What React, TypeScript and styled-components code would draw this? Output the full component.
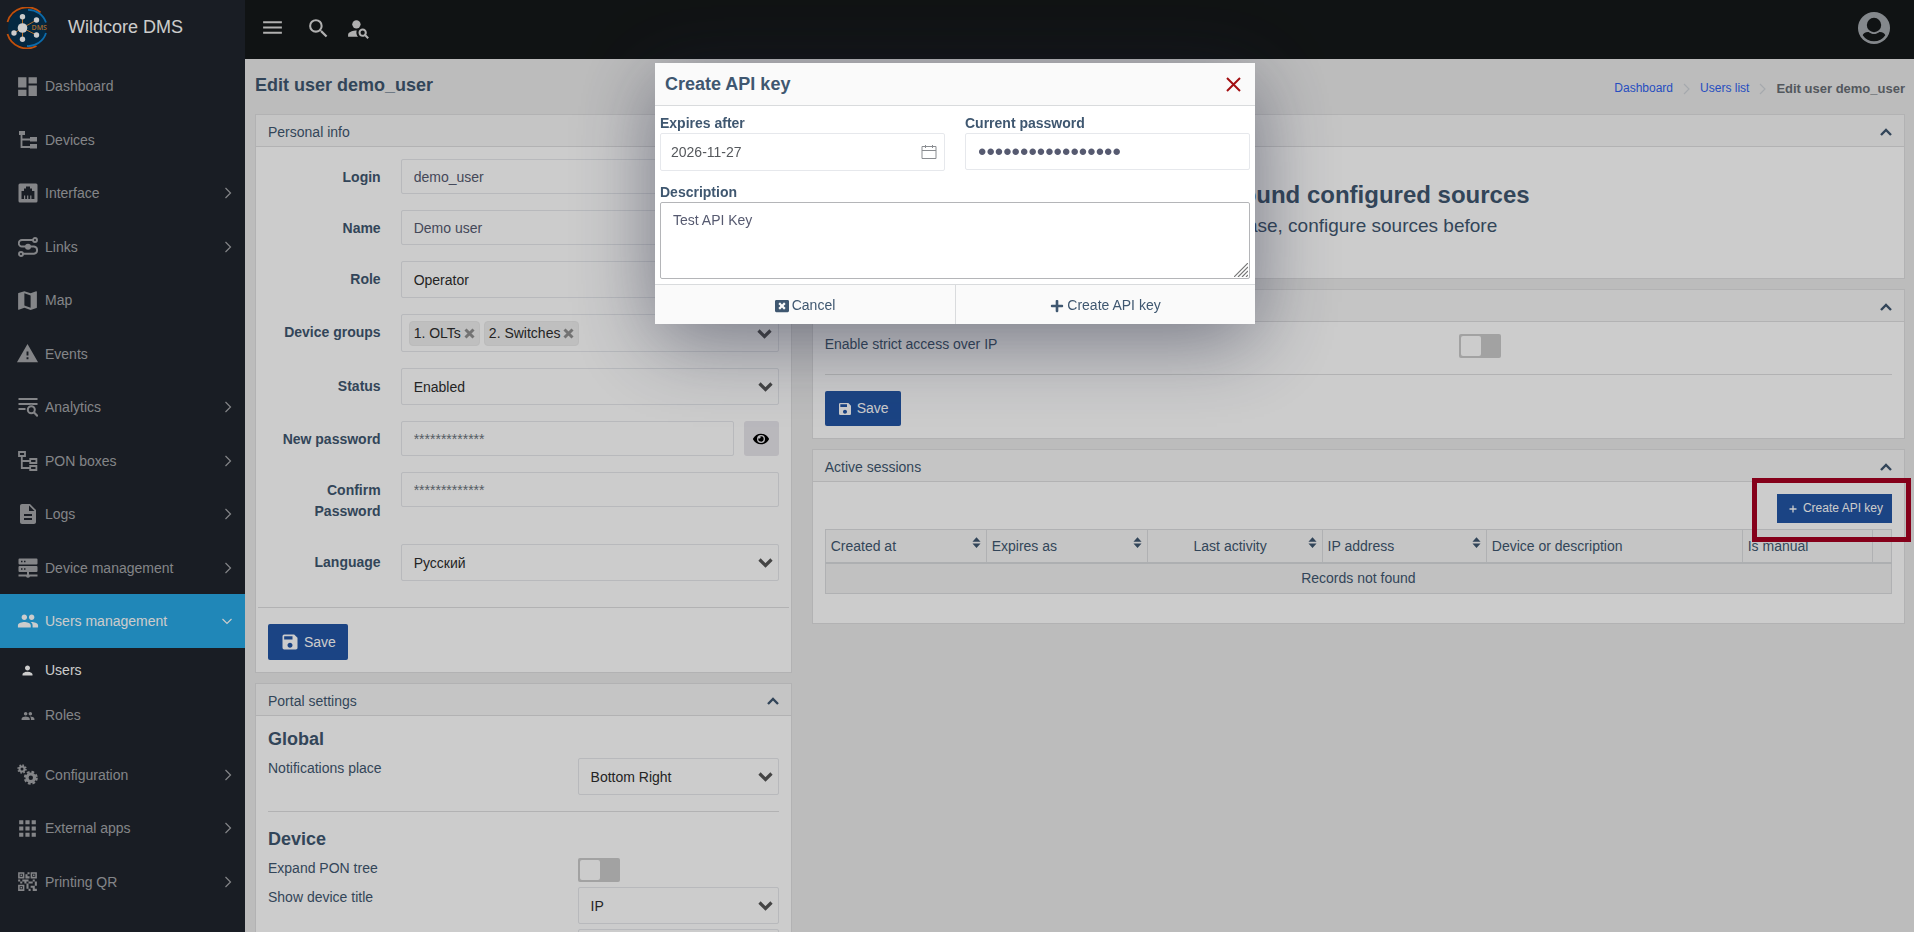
import React, { useState } from "react";
import styled, { createGlobalStyle, css } from "styled-components";
import {
  MdApps,
  MdDashboard,
  MdDescription,
  MdMap,
  MdMenu,
  MdPeople,
  MdPerson,
  MdPersonSearch,
  MdQrCode2,
  MdSave,
  MdSearch,
  MdWarning,
} from "react-icons/md";
import { FaEye, FaPlus, FaWindowClose } from "react-icons/fa";

const color = {
  text: "#3f5770",
  fieldText: "#565a70",
  strong: "#2d2d2d",
  page: "#ececec",
  panel: "#ffffff",
  panelHead: "#f7f7f7",
  line: "#dfdfe0",
  fieldLine: "#e6e8ec",
  primary: "#2255a5",
  sidebar: "#20252d",
  sidebarText: "#a5a7ab",
  active: "#28a9e6",
  header: "#151819",
};

const GlobalStyle = createGlobalStyle`
  *, *::before, *::after { box-sizing: border-box; }
  body {
    margin: 0;
    background: ${color.page};
    color: ${color.text};
    font-family: "Liberation Sans", Arial, sans-serif;
    font-size: 14px;
    line-height: 21px;
  }
  h1, h2, h3, p, ul, ol { margin: 0; padding: 0; }
  ul, ol { list-style: none; }
  a { text-decoration: none; color: inherit; }
  button, input, select, textarea { font: inherit; color: inherit; }
  button { cursor: pointer; }
  svg { display: block; flex: none; }
`;

/* ---------- Shell ---------- */

const Shell = styled.div`
  display: grid;
  grid-template-columns: 245px minmax(0, 1fr);
  height: 100vh;
  overflow: hidden;
`;

const Sidebar = styled.aside`
  background: ${color.sidebar};
  color: ${color.sidebarText};
  overflow: hidden;
`;

const Brand = styled.a`
  display: flex;
  align-items: center;
  gap: 20px;
  height: 59px;
  padding: 0 6px 4px;
  color: #fff;
  font-size: 18px;
`;

const NavItem = styled.li`
  &:nth-child(odd) > a { height: 54px; }
`;

const NavLink = styled.a<{ $active?: boolean }>`
  display: flex;
  align-items: center;
  height: 53px;
  padding: 0 12px 0 14px;
  ${(p) =>
    p.$active &&
    css`
      background: ${color.active};
      color: #fff;
    `}
`;

const NavIcon = styled.span`
  display: flex;
  justify-content: center;
  width: 27px;
  margin-right: 4px;
`;

const NavLabel = styled.span`
  flex: 1;
  padding-top: 1px;
`;

const SubNav = styled.ul`
  padding-bottom: 10px;
`;

const SubLink = styled.a<{ $current?: boolean }>`
  display: flex;
  align-items: center;
  height: 45px;
  padding-left: 14px;
  color: ${(p) => (p.$current ? "#fff" : "inherit")};
`;

const Page = styled.div`
  display: flex;
  flex-direction: column;
  min-width: 0;
  height: 100vh;
`;

const TopBar = styled.header`
  display: flex;
  flex: none;
  align-items: center;
  gap: 15px;
  height: 59px;
  padding: 0 24px 0 14px;
  background: ${color.header};
  color: #dcdcdc;
`;

const IconButton = styled.button`
  display: flex;
  padding: 0;
  border: 0;
  background: none;
`;

const MenuToggle = styled(IconButton)`
  margin: 0 6px 5px 1px;
`;

const BarButton = styled(IconButton)`
  margin-bottom: 3px;
`;

const AvatarButton = styled(IconButton)`
  margin-left: auto;
  margin-bottom: 4px;
`;

const Main = styled.main`
  flex: 1;
  min-height: 0;
  overflow: hidden auto;
  scrollbar-width: none;
`;

const TitleRow = styled.div`
  display: flex;
  align-items: flex-end;
  justify-content: space-between;
  padding: 13px 9px 15px 10px;
`;

const PageTitle = styled.h1`
  font-size: 18px;
  line-height: 27px;
`;

const Crumbs = styled.ol`
  display: flex;
  align-items: center;
  gap: 10px;
  font-size: 12px;
`;

const Crumb = styled.li`
  display: flex;
  align-items: center;
  gap: 10px;
  color: #2f62f0;
`;

const CurrentCrumb = styled.li`
  color: #686e75;
  font-size: 13px;
  font-weight: bold;
`;

const Columns = styled.div`
  display: grid;
  grid-template-columns: minmax(0, 1fr) minmax(0, 2fr);
  margin-right: -1px;
`;

const Column = styled.div`
  display: flex;
  flex-direction: column;
  gap: 10px;
  padding: 0 10px;
`;

/* ---------- Panels ---------- */

const PanelBox = styled.section`
  border: 1px solid ${color.line};
  background: ${color.panel};
`;

const PanelHead = styled.div`
  display: flex;
  align-items: center;
  justify-content: space-between;
  height: 32px;
  padding: 3px 12px 0;
  border-bottom: 1px solid ${color.line};
  background: ${color.panelHead};
`;

const PanelTitle = styled.h2`
  font-size: 14px;
  font-weight: normal;
`;

const PanelBody = styled.div`
  padding: 12px;
`;

const SectionTitle = styled.h3`
  margin-bottom: 8px;
  font-size: 18px;
  line-height: 22px;
`;

const Divider = styled.hr`
  height: 1px;
  margin: 16px 0;
  border: 0;
  background: ${color.line};
`;

const FormDivider = styled(Divider)`
  margin: 26px -10px 16px;
`;

const Notice = styled.div`
  padding: 20px 0 26px;
  text-align: center;
`;

const NoticeTitle = styled.h3`
  font-size: 24px;
  line-height: 32px;
`;

const NoticeText = styled.p`
  font-size: 19px;
  line-height: 29px;
`;

/* ---------- Form parts ---------- */

const FormRow = styled.div`
  display: grid;
  grid-template-columns: minmax(0, 3fr) minmax(0, 9fr);
  margin: 0 -10px 16px;
`;

const FormLabel = styled.label`
  padding: 8px 10px 6px;
  font-weight: bold;
  text-align: right;
`;

const FormField = styled.div`
  display: flex;
  gap: 10px;
  align-items: flex-start;
  padding: 0 10px;
`;

const SettingRow = styled.div`
  display: grid;
  grid-template-columns: minmax(0, 7fr) minmax(0, 5fr);
  align-items: start;
  margin: 0 -10px;
  & > * { margin: 0 10px; }
  & + & { margin-top: 5px; }
`;

const fieldFrame = css`
  width: 100%;
  border: 1px solid ${color.fieldLine};
  border-radius: 2px;
  background: #fff;
  outline: 0;
`;

const Input = styled.input`
  ${fieldFrame}
  height: 35px;
  padding: 0 12px;
  color: ${color.fieldText};
  &::placeholder { color: #6c757d; opacity: 1; }
`;

const SelectWrap = styled.div`
  position: relative;
  flex: 1;
  & > svg {
    position: absolute;
    top: 13px;
    right: 6px;
    pointer-events: none;
  }
`;

const Select = styled.select`
  ${fieldFrame}
  display: block;
  height: 37px;
  padding: 2px 30px 0 12px;
  color: ${color.strong};
  appearance: none;
`;

const TagBox = styled.div`
  ${fieldFrame}
  position: relative;
  display: flex;
  gap: 4px;
  height: 38px;
  padding: 6px 7px;
  color: ${color.strong};
  & > svg {
    position: absolute;
    top: 13px;
    right: 6px;
  }
`;

const Tag = styled.span`
  display: flex;
  align-items: center;
  gap: 3px;
  height: 25px;
  padding: 0 4px;
  border: 1px solid #eaeaea;
  border-radius: 4px;
  background: #efefef;
`;

const RevealButton = styled.button`
  display: flex;
  flex: none;
  align-items: center;
  justify-content: center;
  width: 35px;
  height: 35px;
  padding: 0;
  border: 0;
  border-radius: 3px;
  background: #e8e6ec;
  color: #000;
`;

const Switch = styled.input`
  display: block;
  width: 42px;
  height: 24px;
  padding: 2px;
  border-radius: 2px;
  background: #cbcbcb;
  appearance: none;
  &::before {
    content: "";
    display: block;
    width: 20px;
    height: 20px;
    border-radius: 2px;
    background: #fff;
  }
  &:checked { background: ${color.active}; }
  &:checked::before { margin-left: auto; }
`;

const PrimaryButton = styled.button<{ $size?: "large" | "small" }>`
  display: inline-flex;
  align-items: center;
  gap: 4px;
  height: ${(p) => (p.$size === "large" ? 36 : p.$size === "small" ? 29 : 35)}px;
  padding: 0 ${(p) => (p.$size === "small" ? 9 : 12)}px 0 12px;
  border: 0;
  border-radius: ${(p) => (p.$size === "small" ? 0 : 2)}px;
  background: ${color.primary};
  color: #fff;
  font-size: ${(p) => (p.$size === "small" ? 12 : 14)}px;
  vertical-align: top;
`;

/* ---------- Sessions table ---------- */

const TableTools = styled.div`
  display: flex;
  justify-content: flex-end;
  margin-bottom: 6px;
`;

const Highlighted = styled.div`
  position: relative;
  display: flex;
  &::after {
    content: "";
    position: absolute;
    inset: -16px -19px -19px -25px;
    z-index: 10;
    border: 5px solid #85001a;
    pointer-events: none;
  }
`;

const Table = styled.table`
  width: 100%;
  margin-bottom: 17px;
  border-collapse: collapse;
  table-layout: fixed;
  border: 1px solid #dcdee0;
`;

const HeadCell = styled.th<{ $width: number }>`
  width: ${(p) => p.$width}%;
  height: 33px;
  padding: 2px 5px 0;
  border-right: 1px solid #dcdee0;
  border-bottom: 2px solid #d9dbde;
  background: ${color.panelHead};
  font-weight: normal;
`;

const HeadContent = styled.div<{ $center?: boolean }>`
  display: flex;
  justify-content: space-between;
  white-space: nowrap;
  & > span {
    flex: 1;
    text-align: ${(p) => (p.$center ? "center" : "left")};
  }
`;

const EmptyCell = styled.td`
  height: 31px;
  padding: 0;
  background: #f2f2f2;
  text-align: center;
`;

/* ---------- Dialog ---------- */

const Overlay = styled.div`
  position: fixed;
  inset: 0;
  z-index: 5;
  display: flex;
  align-items: flex-start;
  justify-content: center;
  padding: 63px 4px 0 0;
  background: rgba(0, 0, 0, 0.2);
`;

const Dialog = styled.form`
  width: 600px;
  max-width: 100%;
  background: #fff;
  box-shadow: 0 16px 76px rgba(30, 34, 60, 0.5);
`;

const DialogHead = styled.div`
  display: flex;
  align-items: center;
  justify-content: space-between;
  height: 43px;
  padding: 1px 14px 0 10px;
  border-bottom: 1px solid #d9dbdd;
  background: #fafafa;
`;

const DialogTitle = styled.h2`
  font-size: 18px;
  line-height: 27px;
`;

const DialogBody = styled.div`
  display: grid;
  grid-template-columns: 1fr 1fr;
  gap: 10px 20px;
  padding: 6px 5px 5px;
`;

const DialogField = styled.div<{ $full?: boolean }>`
  position: relative;
  grid-column: ${(p) => (p.$full ? "1 / -1" : "auto")};
  & > label {
    display: block;
    padding-top: 2px;
    line-height: 19px;
    font-weight: bold;
  }
`;

const DateInput = styled(Input)`
  height: 38px;
  padding: 0 36px 0 10px;
  color: #55585c;
`;

const PasswordInput = styled(Input)`
  height: 37px;
  font-size: 24px;
`;

const FieldIcon = styled.span`
  position: absolute;
  right: 8px;
  bottom: 11px;
`;

const Textarea = styled.textarea`
  ${fieldFrame}
  display: block;
  height: 77px;
  padding: 7px 12px;
  border-color: #b4b5b8;
  color: ${color.fieldText};
  resize: none;
`;

const Grip = styled.span`
  position: absolute;
  right: 2px;
  bottom: 2px;
`;

const DialogFoot = styled.div`
  display: grid;
  grid-template-columns: 1fr 1fr;
  height: 40px;
  border-top: 1px solid #d9dbdd;
`;

const FootButton = styled.button`
  display: flex;
  align-items: center;
  justify-content: center;
  gap: 3px;
  padding: 2px 0 0;
  border: 0;
  background: #fafafa;
  & + & { border-left: 1px solid #d9dbdd; }
`;

/* ---------- Drawings ---------- */

const Logo = () => (
  <svg width="42" height="42" viewBox="0 0 42 42">
    <circle cx="21" cy="21" r="19" fill="#063352" />
    <path d="M1.500 15a20.300 20.300 0 0 1 33-9.500M1.500 27a20.300 20.300 0 0 0 29 12" fill="none" stroke="#f0640f" strokeWidth="1.800" />
    <path d="M22 2.800a18.500 18.500 0 0 1 18 12.700M40 26a18.500 18.500 0 0 1-19 13" fill="none" stroke="#0f86d6" strokeWidth="1.800" />
    <path d="M16.500 21V9.500M16.500 21l14-8M16.500 21v11.500M16.500 21L8 26M16.500 21l14 7" stroke="#e08a35" strokeWidth="1" />
    <g fill="#fff">
      <circle cx="16.500" cy="21" r="4.800" />
      <circle cx="16.500" cy="9.800" r="2.700" />
      <circle cx="30.500" cy="13" r="2.700" />
      <circle cx="30.500" cy="28" r="2.700" />
      <circle cx="16.500" cy="32.300" r="2.700" />
      <circle cx="8" cy="26" r="2.700" />
    </g>
    <text x="25.500" y="23.200" fill="#cf8437" fontSize="7" fontWeight="600" fontFamily="Open Sans, sans-serif">DMS</text>
  </svg>
);

const Glyph = ({ children }: { children: React.ReactNode }) => (
  <svg width="20" height="20" viewBox="0 0 20 20" fill="currentColor">{children}</svg>
);

const DevicesIcon = () => (
  <Glyph>
    <path d="M1 1h6v4H1zM12 7h7v4.500h-7zM12 14h7v4.500h-7z" />
    <path d="M3.500 5v12H12M3.500 9.500H12" fill="none" stroke="currentColor" strokeWidth="1.800" />
  </Glyph>
);

const BoxesIcon = () => (
  <Glyph>
    <g fill="none" stroke="currentColor" strokeWidth="1.800">
      <path d="M1 1h6v4H1zM12.200 8h6.200v4h-6.200zM12.200 15h6.200v4h-6.200zM3.800 5v12h8.400M3.800 10h8.400" />
    </g>
  </Glyph>
);

const EthernetIcon = () => (
  <Glyph>
    <path
      fillRule="evenodd"
      d="M2 .5h16A1.500 1.500 0 0 1 19.500 2v16a1.500 1.500 0 0 1-1.500 1.500H2A1.500 1.500 0 0 1 .5 18V2A1.500 1.500 0 0 1 2 .5zM3.500 8v8h2.500v-3.500h1.200V16h1.900v-3.500h1.200V16h1.900v-3.500h1.200V16h3V8H14V5.500h-2V3.500H8v2H6V8z"
    />
  </Glyph>
);

const RouteIcon = () => (
  <Glyph>
    <g fill="none" stroke="currentColor" strokeWidth="1.900">
      <circle cx="17" cy="3" r="2" />
      <circle cx="3" cy="17" r="2" />
      <path d="M15 3H4a3.200 3.200 0 0 0 0 6.500h12a3.700 3.700 0 0 1 0 7.300H5" />
    </g>
    <circle cx="10" cy="9.700" r="3" />
  </Glyph>
);

const AnalyticsIcon = () => (
  <Glyph>
    <path d="M.5 1h19v2H.5zM.5 6h19v2H.5zM.5 11h7v2h-7z" />
    <circle cx="13.300" cy="12.600" r="4.800" fill={color.sidebar} />
    <circle cx="13.300" cy="12.800" r="3.500" fill="none" stroke="currentColor" strokeWidth="2" />
    <path d="M15.800 15.300l4 4" stroke="currentColor" strokeWidth="2.200" />
  </Glyph>
);

const ServersIcon = () => (
  <Glyph>
    <path
      fillRule="evenodd"
      d="M1.500.5h17a1 1 0 0 1 1 1v4a1 1 0 0 1-1 1h-17a1 1 0 0 1-1-1v-4a1 1 0 0 1 1-1zM3 2.800v1.500h1.500V2.800zM6 2.800v1.500h1.500V2.800zM1.500 8h17a1 1 0 0 1 1 1v4a1 1 0 0 1-1 1H11v2.500h8.500v2H12a2.200 2.200 0 0 1-4 0H.5v-2H9V14H1.500a1 1 0 0 1-1-1V9a1 1 0 0 1 1-1zM3 10.300v1.500h1.500v-1.500zM6 10.300v1.500h1.500v-1.500z"
    />
  </Glyph>
);

const GearsIcon = () => (
  <svg width="21" height="21" viewBox="0 0 21 21" fill="none" stroke="currentColor">
    <circle cx="5" cy="5" r="2.500" strokeWidth="2" />
    <circle cx="5" cy="5" r="3.900" strokeWidth="1.600" strokeDasharray="1.530 1.530" />
    <circle cx="13.800" cy="13.800" r="3.800" strokeWidth="3.200" />
    <circle cx="13.800" cy="13.800" r="5.900" strokeWidth="2.200" strokeDasharray="2.700 1.930" />
  </svg>
);

const ThinChevron = ({ down }: { down?: boolean }) => (
  <svg width="12" height="12" viewBox="0 0 12 12" fill="none" stroke="currentColor" strokeWidth="1.200">
    <path d={down ? "M1.500 4l4.500 4.500L10.500 4" : "M4.500 1l5 5-5 5"} />
  </svg>
);

const SelectChevron = () => (
  <svg width="15" height="12" viewBox="0 0 15 12" fill="none" stroke="#555" strokeWidth="3.200">
    <path d="M1.500 2.500l6 6 6-6" />
  </svg>
);

const CollapseIcon = () => (
  <svg width="12" height="9" viewBox="0 0 12 9" fill="none" stroke="currentColor" strokeWidth="2.400">
    <path d="M1 7l5-5 5 5" />
  </svg>
);

const CrumbChevron = () => (
  <svg width="7" height="12" viewBox="0 0 7 12" fill="none" stroke="#cfd4d9" strokeWidth="1.200">
    <path d="M1 1l5 5-5 5" />
  </svg>
);

const TagCross = () => (
  <svg width="11" height="11" viewBox="0 0 11 11" stroke="#909090" strokeWidth="3">
    <path d="M1.500 1.500l8 8M9.500 1.500l-8 8" />
  </svg>
);

const SortIcon = () => (
  <svg width="9" height="14" viewBox="0 0 10 14" fill="currentColor">
    <path d="M5 .5l4.500 5h-9zM5 12.500L.5 7.500h9z" />
  </svg>
);

const Avatar = () => (
  <svg width="32" height="32" viewBox="0 0 32 32">
    <circle cx="16" cy="16" r="16" fill="#a6abb0" />
    <circle cx="16" cy="13" r="7.200" fill={color.header} />
    <path
      d="M10 20c-2.800 0-4.800 1.500-5.300 3.200a13.500 13.500 0 0 0 22.600 0c-.5-1.700-2.500-3.200-5.300-3.200-1.500 0-2.500 2-6 2s-4.500-2-6-2z"
      fill={color.header}
    />
  </svg>
);

const CloseIcon = () => (
  <svg width="15" height="15" viewBox="0 0 15 15" stroke="#a30f12" strokeWidth="2">
    <path d="M1 1l13 13M14 1L1 14" />
  </svg>
);

const CalendarIcon = () => (
  <svg width="16" height="16" viewBox="0 0 16 16" fill="none" stroke="#8a8d91">
    <path d="M1 2.500h14v12H1zM1 6.500h14M4.500 1v3M11.500 1v3" />
  </svg>
);

const GripIcon = () => (
  <svg width="14" height="14" viewBox="0 0 14 14" stroke="#777" strokeWidth="1.200">
    <path d="M0 14L14 0M4 14L14 4M8 14l6-6M12 14l2-2" />
  </svg>
);

/* ---------- Data ---------- */

type NavEntry = {
  label: string;
  icon: React.ReactNode;
  expandable?: boolean;
  active?: boolean;
  children?: { label: string; icon: React.ReactNode; current?: boolean }[];
};

const navigation: NavEntry[] = [
  { label: "Dashboard", icon: <MdDashboard size={25} /> },
  { label: "Devices", icon: <DevicesIcon /> },
  { label: "Interface", icon: <EthernetIcon />, expandable: true },
  { label: "Links", icon: <RouteIcon />, expandable: true },
  { label: "Map", icon: <MdMap size={25} /> },
  { label: "Events", icon: <MdWarning size={23} /> },
  { label: "Analytics", icon: <AnalyticsIcon />, expandable: true },
  { label: "PON boxes", icon: <BoxesIcon />, expandable: true },
  { label: "Logs", icon: <MdDescription size={24} />, expandable: true },
  { label: "Device management", icon: <ServersIcon />, expandable: true },
  {
    label: "Users management",
    icon: <MdPeople size={22} />,
    active: true,
    children: [
      { label: "Users", icon: <MdPerson size={15} />, current: true },
      { label: "Roles", icon: <MdPeople size={14} /> },
    ],
  },
  { label: "Configuration", icon: <GearsIcon />, expandable: true },
  { label: "External apps", icon: <MdApps size={25} />, expandable: true },
  { label: "Printing QR", icon: <MdQrCode2 size={25} />, expandable: true },
];

const sessionColumns = [
  { label: "Created at", width: 15.1, sortable: true },
  { label: "Expires as", width: 15.1, sortable: true },
  { label: "Last activity", width: 16.4, sortable: true, center: true },
  { label: "IP address", width: 15.4, sortable: true },
  { label: "Device or description", width: 24 },
  { label: "Is manual", width: 12.2 },
  { label: "", width: 1.8 },
];

/* ---------- Composed parts ---------- */

const Panel = ({ title, collapsible, children }: { title: string; collapsible?: boolean; children: React.ReactNode }) => (
  <PanelBox>
    <PanelHead>
      <PanelTitle>{title}</PanelTitle>
      {collapsible && (
        <IconButton type="button" aria-label={`Collapse ${title}`}>
          <CollapseIcon />
        </IconButton>
      )}
    </PanelHead>
    <PanelBody>{children}</PanelBody>
  </PanelBox>
);

const Row = ({ id, label, children }: { id: string; label: string; children: React.ReactNode }) => (
  <FormRow>
    <FormLabel htmlFor={id}>{label}</FormLabel>
    <FormField>{children}</FormField>
  </FormRow>
);

const Dropdown = ({ id, value, label }: { id: string; value: string; label?: string }) => (
  <SelectWrap>
    <Select id={id} defaultValue={value} aria-label={label}>
      <option>{value}</option>
    </Select>
    <SelectChevron />
  </SelectWrap>
);

const SidebarNav = () => (
  <Sidebar>
    <Brand href="#home">
      <Logo />
      Wildcore DMS
    </Brand>
    <nav>
      <ul>
        {navigation.map((item) => (
          <NavItem key={item.label}>
            <NavLink href="#nav" $active={item.active}>
              <NavIcon>{item.icon}</NavIcon>
              <NavLabel>{item.label}</NavLabel>
              {(item.expandable || item.active) && <ThinChevron down={item.active} />}
            </NavLink>
            {item.children && (
              <SubNav>
                {item.children.map((sub) => (
                  <li key={sub.label}>
                    <SubLink href="#nav" $current={sub.current}>
                      <NavIcon>{sub.icon}</NavIcon>
                      {sub.label}
                    </SubLink>
                  </li>
                ))}
              </SubNav>
            )}
          </NavItem>
        ))}
      </ul>
    </nav>
  </Sidebar>
);

const PersonalInfo = () => {
  const [revealed, setRevealed] = useState(false);
  return (
    <Panel title="Personal info">
      <Row id="login" label="Login"><Input id="login" defaultValue="demo_user" /></Row>
      <Row id="name" label="Name"><Input id="name" defaultValue="Demo user" /></Row>
      <Row id="role" label="Role"><Dropdown id="role" value="Operator" /></Row>
      <Row id="groups" label="Device groups">
        <TagBox id="groups">
          {["1. OLTs", "2. Switches"].map((tag) => (
            <Tag key={tag}>
              {tag}
              <IconButton type="button" aria-label={`Remove ${tag}`}><TagCross /></IconButton>
            </Tag>
          ))}
          <SelectChevron />
        </TagBox>
      </Row>
      <Row id="status" label="Status"><Dropdown id="status" value="Enabled" /></Row>
      <Row id="new-password" label="New password">
        <Input id="new-password" type={revealed ? "text" : "password"} placeholder="*************" />
        <RevealButton type="button" aria-label="Show password" onClick={() => setRevealed(!revealed)}>
          <FaEye size={16} />
        </RevealButton>
      </Row>
      <Row id="confirm-password" label="Confirm Password">
        <Input id="confirm-password" type="password" placeholder="*************" />
      </Row>
      <Row id="language" label="Language"><Dropdown id="language" value="Русский" /></Row>
      <FormDivider />
      <PrimaryButton type="button" $size="large">
        <MdSave size={20} />
        Save
      </PrimaryButton>
    </Panel>
  );
};

const PortalSettings = () => (
  <Panel title="Portal settings" collapsible>
    <SectionTitle>Global</SectionTitle>
    <SettingRow>
      <label htmlFor="notifications">Notifications place</label>
      <Dropdown id="notifications" value="Bottom Right" />
    </SettingRow>
    <Divider />
    <SectionTitle>Device</SectionTitle>
    <SettingRow>
      <label htmlFor="pon-tree">Expand PON tree</label>
      <Switch id="pon-tree" type="checkbox" />
    </SettingRow>
    <SettingRow>
      <label htmlFor="device-title">Show device title</label>
      <Dropdown id="device-title" value="IP" />
    </SettingRow>
    <SettingRow>
      <span />
      <Dropdown id="device-subtitle" value="Name" label="Device subtitle" />
    </SettingRow>
  </Panel>
);

const ActiveSessions = () => (
  <Panel title="Active sessions" collapsible>
    <TableTools>
      <Highlighted>
        <PrimaryButton type="button" $size="small">
          <svg width="10" height="10" viewBox="0 0 10 10" stroke="currentColor" strokeWidth="1.300">
            <path d="M4 1.500v7M.5 5h7" />
          </svg>
          Create API key
        </PrimaryButton>
      </Highlighted>
    </TableTools>
    <Table>
      <thead>
        <tr>
          {sessionColumns.map((col) => (
            <HeadCell key={col.label} $width={col.width}>
              <HeadContent $center={col.center}>
                <span>{col.label}</span>
                {col.sortable && <SortIcon />}
              </HeadContent>
            </HeadCell>
          ))}
        </tr>
      </thead>
      <tbody>
        <tr>
          <EmptyCell colSpan={sessionColumns.length}>Records not found</EmptyCell>
        </tr>
      </tbody>
    </Table>
  </Panel>
);

const ApiKeyDialog = () => (
  <Overlay>
    <Dialog role="dialog" aria-labelledby="dialog-title">
      <DialogHead>
        <DialogTitle id="dialog-title">Create API key</DialogTitle>
        <IconButton type="button" aria-label="Close"><CloseIcon /></IconButton>
      </DialogHead>
      <DialogBody>
        <DialogField>
          <label htmlFor="expires">Expires after</label>
          <DateInput id="expires" defaultValue="2026-11-27" />
          <FieldIcon><CalendarIcon /></FieldIcon>
        </DialogField>
        <DialogField>
          <label htmlFor="current-password">Current password</label>
          <PasswordInput id="current-password" type="password" defaultValue="demo-user-passwrd" />
        </DialogField>
        <DialogField $full>
          <label htmlFor="description">Description</label>
          <Textarea
            id="description"
            defaultValue="Test API Key"
            autoFocus
            onFocus={(e) => e.currentTarget.setSelectionRange(12, 12)}
          />
          <Grip><GripIcon /></Grip>
        </DialogField>
      </DialogBody>
      <DialogFoot>
        <FootButton type="button"><FaWindowClose size={14} />Cancel</FootButton>
        <FootButton type="button"><FaPlus size={14} />Create API key</FootButton>
      </DialogFoot>
    </Dialog>
  </Overlay>
);

export default function App() {
  return (
    <>
      <GlobalStyle />
      <Shell>
        <SidebarNav />
        <Page>
          <TopBar>
            <MenuToggle type="button" aria-label="Toggle menu"><MdMenu size={25} /></MenuToggle>
            <BarButton type="button" aria-label="Search"><MdSearch size={25} /></BarButton>
            <BarButton type="button" aria-label="Find user"><MdPersonSearch size={25} /></BarButton>
            <AvatarButton type="button" aria-label="Account"><Avatar /></AvatarButton>
          </TopBar>
          <Main>
            <TitleRow>
              <PageTitle>Edit user demo_user</PageTitle>
              <Crumbs>
                <Crumb><a href="#dashboard">Dashboard</a><CrumbChevron /></Crumb>
                <Crumb><a href="#users">Users list</a><CrumbChevron /></Crumb>
                <CurrentCrumb>Edit user demo_user</CurrentCrumb>
              </Crumbs>
            </TitleRow>
            <Columns>
              <Column>
                <PersonalInfo />
                <PortalSettings />
              </Column>
              <Column>
                <Panel title="Sources" collapsible>
                  <Notice>
                    <NoticeTitle>Not found configured sources</NoticeTitle>
                    <NoticeText>Please, configure sources before</NoticeText>
                  </Notice>
                </Panel>
                <Panel title="Access" collapsible>
                  <SettingRow>
                    <label htmlFor="strict-ip">Enable strict access over IP</label>
                    <Switch id="strict-ip" type="checkbox" />
                  </SettingRow>
                  <Divider />
                  <PrimaryButton type="button">
                    <MdSave size={16} />
                    Save
                  </PrimaryButton>
                </Panel>
                <ActiveSessions />
              </Column>
            </Columns>
          </Main>
        </Page>
      </Shell>
      <ApiKeyDialog />
    </>
  );
}
